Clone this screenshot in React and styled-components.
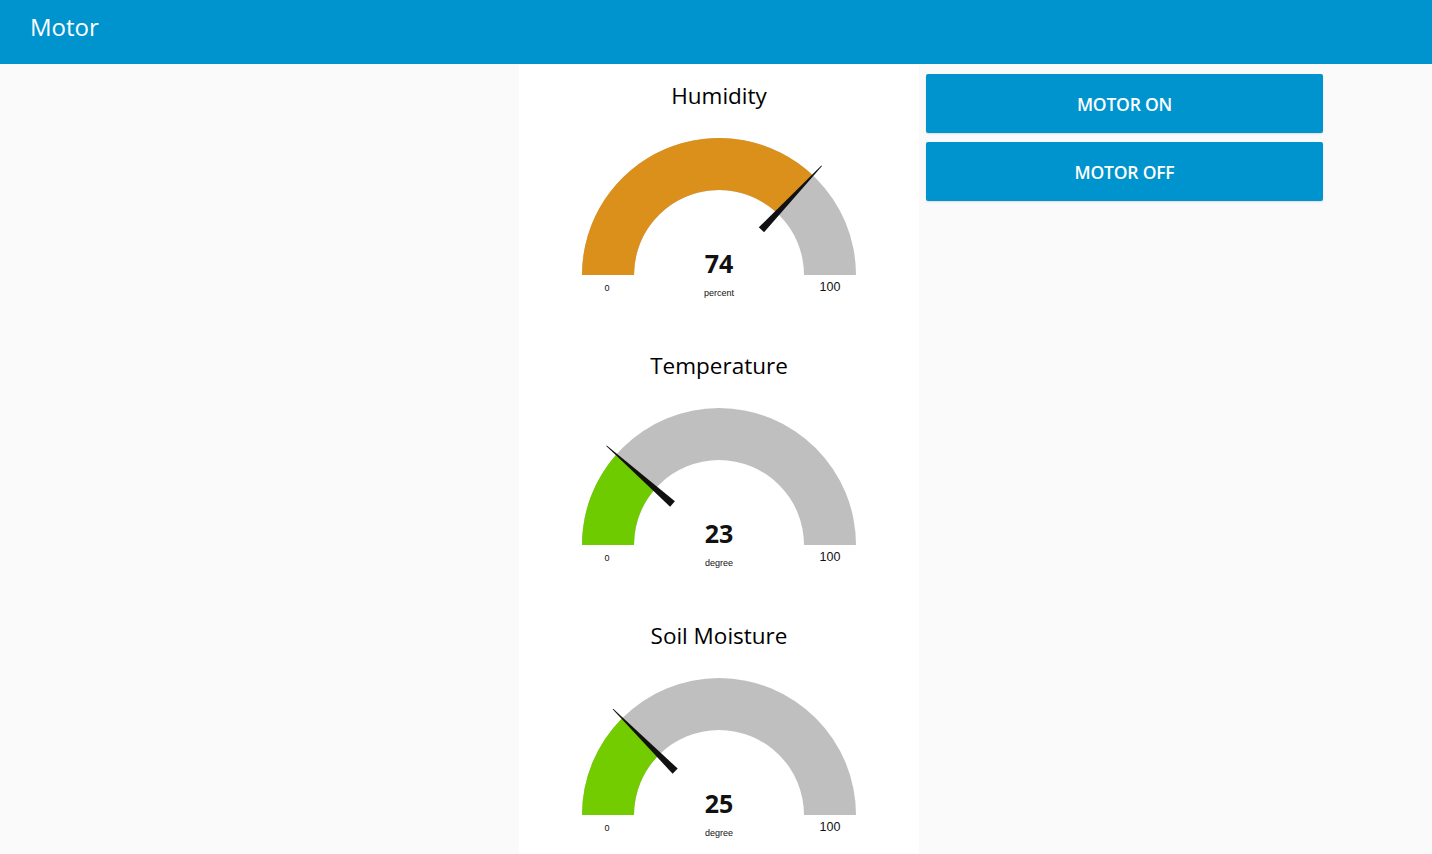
import React from "react";
import styled, { createGlobalStyle } from "styled-components";

const Global = createGlobalStyle`
  html, body { margin: 0; padding: 0; background: #fafafa; }
  body { font-family: "Open Sans", "Noto Sans", Arial, sans-serif; color: #111; }
`;

const Header = styled.header`
  height: 64px;
  background: #0094ce;
  display: flex;
  align-items: center;
  padding: 0 0 12px 30px;
  box-sizing: border-box;
`;

const HeaderTitle = styled.h1`
  margin: 0;
  font-size: 24px;
  font-weight: 400;
  color: #fff;
`;

const Main = styled.main`
  display: flex;
  align-items: flex-start;
  gap: 7px;
  padding-left: 519px;
`;

const Card = styled.section`
  width: 400px;
  background: #fff;
  display: flex;
  flex-direction: column;
`;

const GaugeBlock = styled.div`
  height: 270px;
  display: flex;
  flex-direction: column;
  align-items: center;
`;

const GaugeTitle = styled.div`
  height: 66px;
  box-sizing: border-box;
  padding-top: 17px;
  font-size: 22.5px;
  line-height: 30px;
  font-weight: 500;
  color: #000;
`;

const ButtonColumn = styled.div`
  width: 397px;
  padding-top: 10px;
  display: flex;
  flex-direction: column;
  gap: 9px;
`;

const ActionButton = styled.button`
  height: 59px;
  border: none;
  border-radius: 2px;
  background: #0094ce;
  color: #fff;
  font-family: "Open Sans", "Noto Sans", Arial, sans-serif;
  font-size: 17.5px;
  font-weight: 600;
  letter-spacing: -0.2px;
  box-shadow: 0 1px 2px rgba(0,0,0,0.12);
  cursor: pointer;
`;

const CX = 200;
const CY = 145;
const R = 137;
const RI = 85;

function arcPath(fromDeg, toDeg) {
  const rad = (d) => (d * Math.PI) / 180;
  const p = (r, d) => [CX + r * Math.cos(rad(d)), CY - r * Math.sin(rad(d))];
  const [x0, y0] = p(R, fromDeg);
  const [x1, y1] = p(R, toDeg);
  const [x2, y2] = p(RI, toDeg);
  const [x3, y3] = p(RI, fromDeg);
  return `M${x0} ${y0} A${R} ${R} 0 0 1 ${x1} ${y1} L${x2} ${y2} A${RI} ${RI} 0 0 0 ${x3} ${y3} Z`;
}

function needle(deg) {
  const t = (deg * Math.PI) / 180;
  const d = [Math.cos(t), -Math.sin(t)];
  const p = [Math.sin(t), Math.cos(t)];
  const r1 = 62, r2 = 150, w1 = 3.6, w2 = 0.4;
  const pt = (r, w) => `${CX + d[0] * r + p[0] * w},${CY + d[1] * r + p[1] * w}`;
  return [pt(r1, w1), pt(r2, w2), pt(r2, -w2), pt(r1, -w1)].join(" ");
}

const Label = styled.text`
  font-family: "Liberation Sans", Arial, sans-serif;
  fill: #111;
`;

const Value = styled.text`
  font-family: "Open Sans", "Noto Sans", Arial, sans-serif;
  font-weight: 700;
  font-size: 25px;
  fill: #111;
`;

function Gauge({ title, value, units, color }) {
  const deg = 180 - (value / 100) * 180;
  return (
    <GaugeBlock>
      <GaugeTitle>{title}</GaugeTitle>
      <svg width="400" height="204" viewBox="0 0 400 204">
        <path d={arcPath(180, 0)} fill="#bfbfbf" />
        <path d={arcPath(180, deg)} fill={color} />
        <polygon points={needle(deg)} fill="#111" />
        <Value x={CX} y={143} textAnchor="middle">{value}</Value>
        <Label x={CX} y={166} textAnchor="middle" fontSize="9">{units}</Label>
        <Label x={88} y={161} textAnchor="middle" fontSize="9">0</Label>
        <Label x={311} y={161} textAnchor="middle" fontSize="12.5">100</Label>
      </svg>
    </GaugeBlock>
  );
}

export default function App() {
  return (
    <>
      <Global />
      <Header>
        <HeaderTitle>Motor</HeaderTitle>
      </Header>
      <Main>
        <Card>
          <Gauge title="Humidity" value={74} units="percent" color="#da901a" />
          <Gauge title="Temperature" value={23} units="degree" color="#6dcb00" />
          <Gauge title="Soil Moisture" value={25} units="degree" color="#72cc00" />
        </Card>
        <ButtonColumn>
          <ActionButton>MOTOR ON</ActionButton>
          <ActionButton>MOTOR OFF</ActionButton>
        </ButtonColumn>
      </Main>
    </>
  );
}
